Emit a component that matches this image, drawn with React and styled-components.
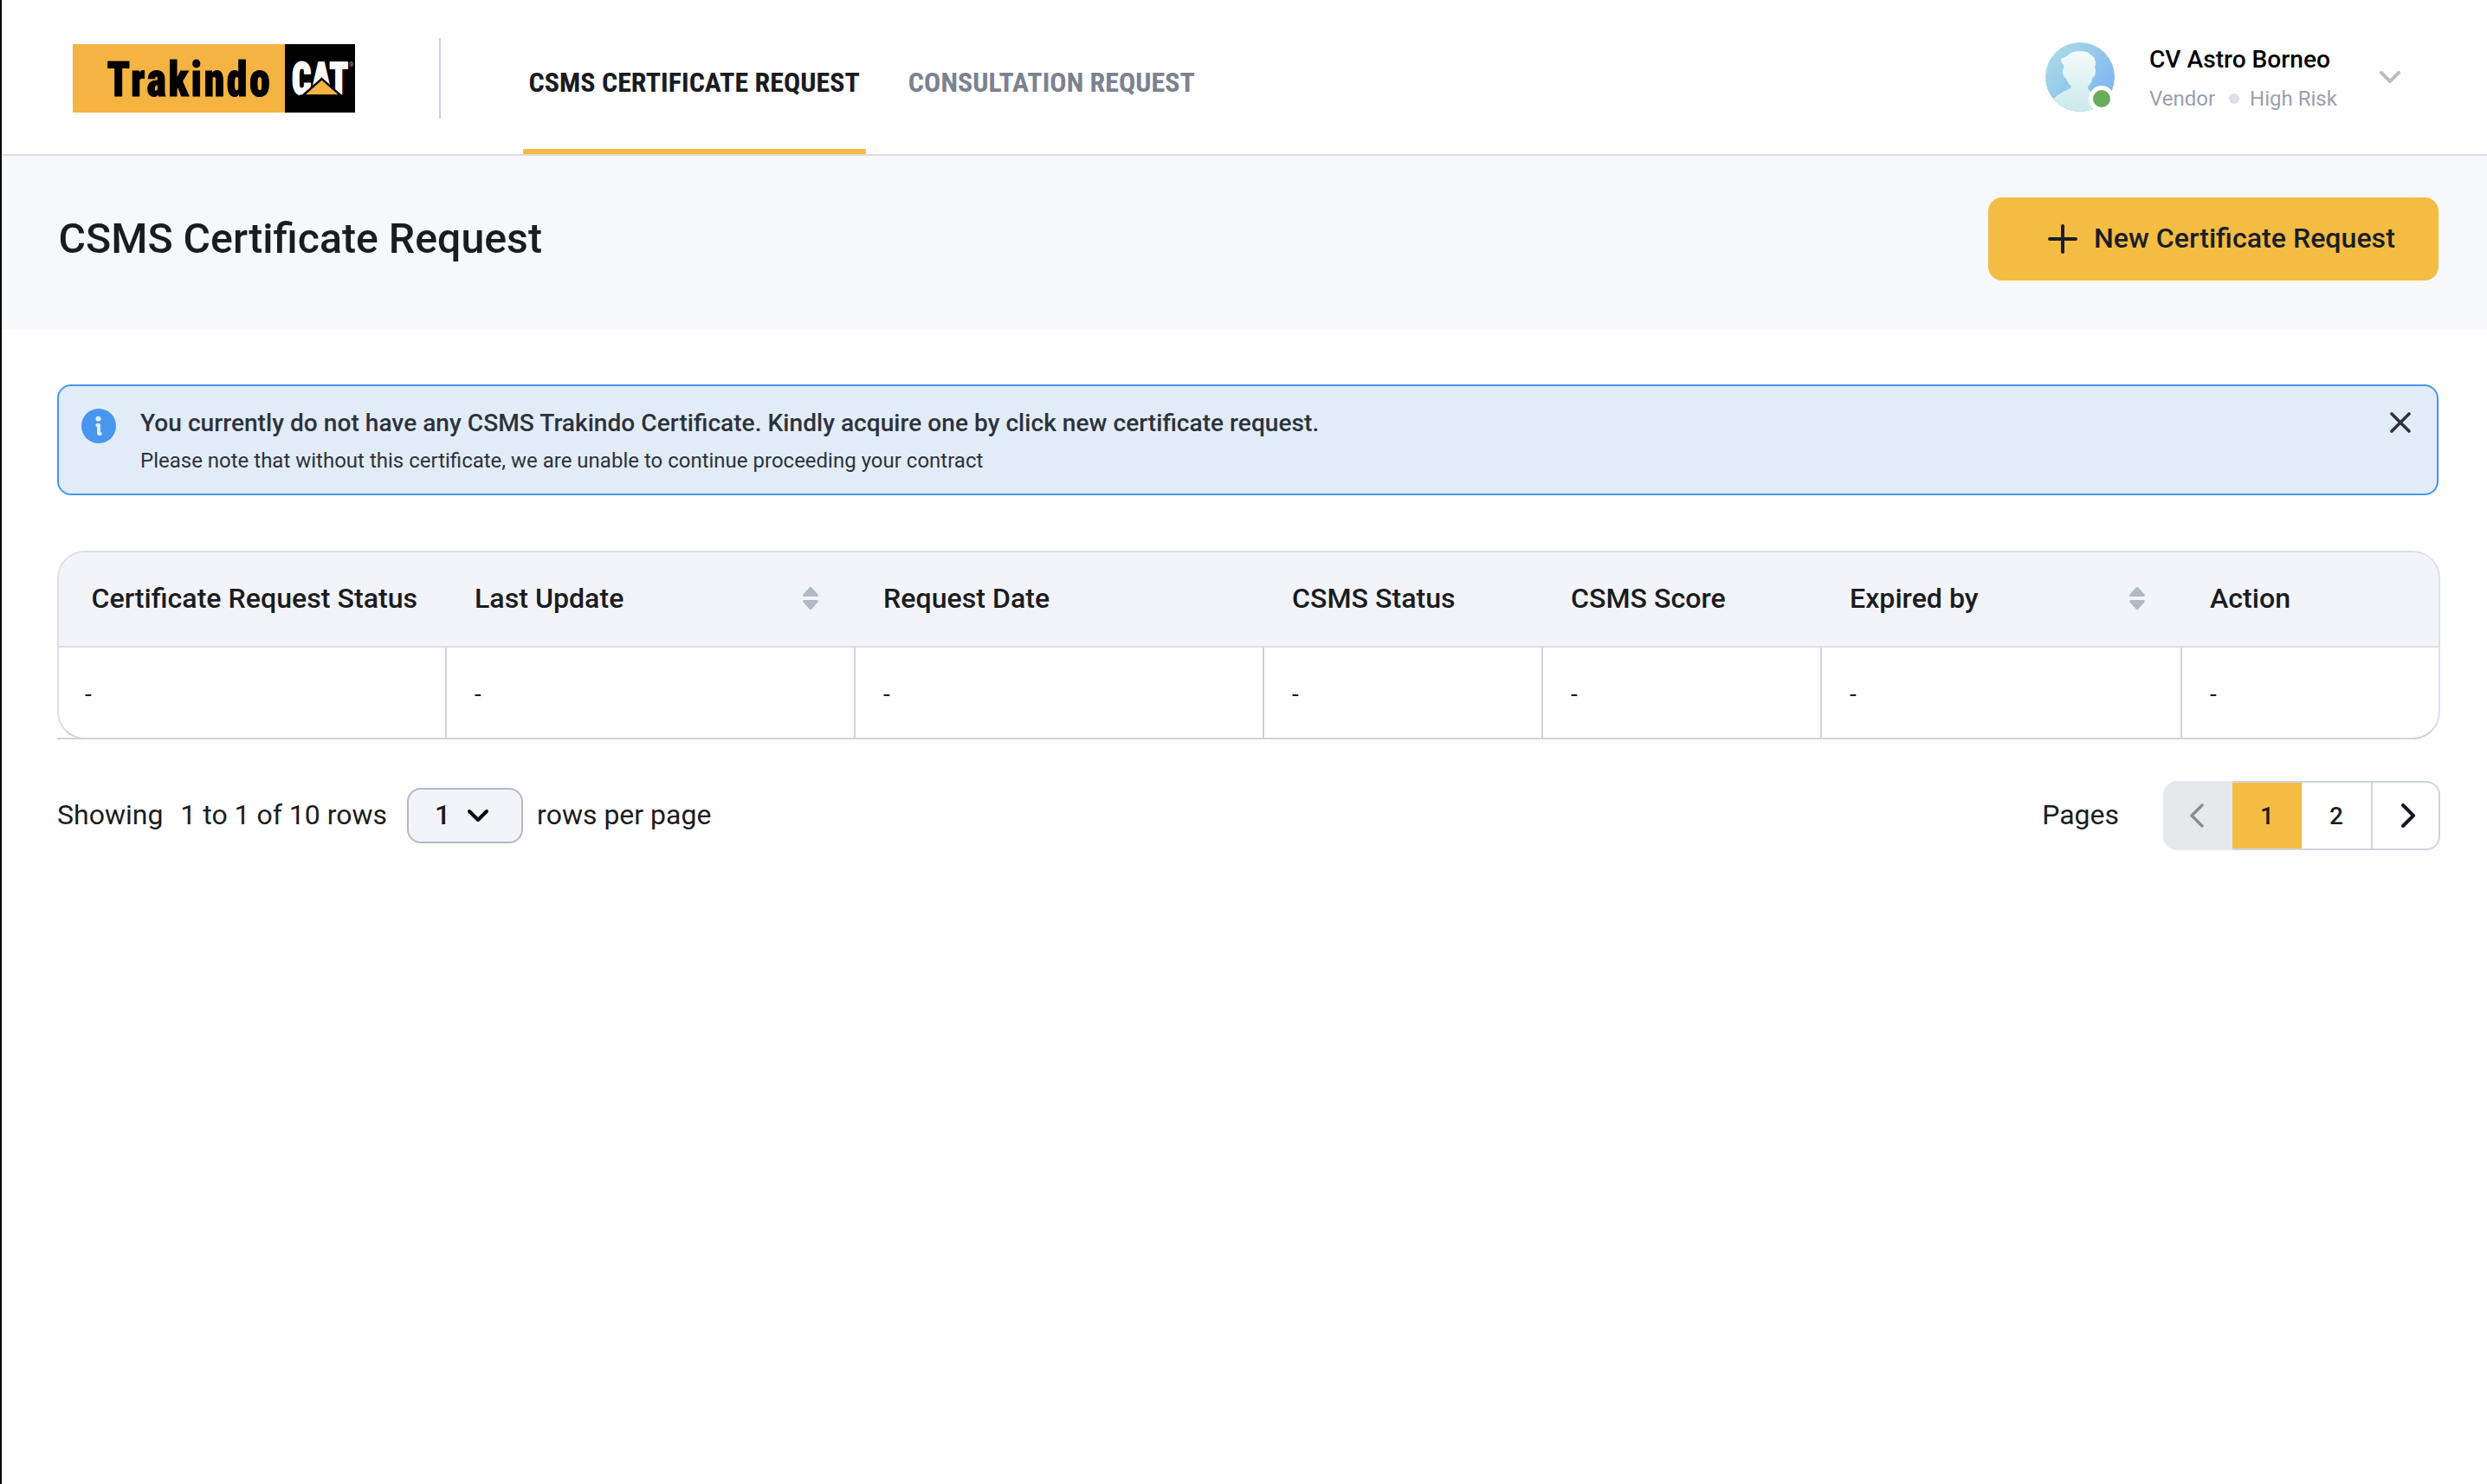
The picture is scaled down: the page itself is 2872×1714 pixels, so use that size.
import React from 'react';
import styled, { createGlobalStyle } from 'styled-components';

const GlobalStyle = createGlobalStyle`
    * {
        box-sizing: border-box;
    }

    body {
        margin: 0;
        background: #ffffff;
        color: #1b1c1f;
        font-family: Roboto, "Liberation Sans", sans-serif;
    }

    button {
        font-family: inherit;
        color: inherit;
        border: none;
        background: none;
        padding: 0;
    }
`;

const Page = styled.div`
    min-height: 1714px;
    border-left: 2px solid #000000;
`;

const Header = styled.header`
    display: flex;
    align-items: center;
    height: 180px;
    padding-left: 82px;
    padding-right: 100px;
    border-bottom: 2px solid #dddddd;
`;

const Logo = styled.svg`
    display: block;
    width: 326px;
    height: 79px;
    margin-top: 3px;
    overflow: visible;

    & > .word {
        font-family: "Roboto Condensed", Roboto, sans-serif;
        font-stretch: 75%;
        font-weight: 900;
    }
`;

const Divider = styled.div`
    width: 2px;
    height: 93px;
    margin-left: 97px;
    margin-top: 3px;
    background: #cdd2dd;
`;

const Nav = styled.nav`
    display: flex;
    gap: 42px;
    height: 178px;
    margin-left: 95px;
`;

const NavItem = styled.a`
    display: flex;
    align-items: center;
    height: 178px;
    padding: 23px 7.5px 6px 6.5px;
    border-bottom: 6px solid ${({ $active }) => ($active ? '#f3bc43' : 'transparent')};
    font-family: "Roboto Condensed", Roboto, sans-serif;
    font-stretch: 75%;
    font-size: 32px;
    font-weight: 700;
    color: ${({ $active }) => ($active ? '#1b1c1f' : '#7b8290')};
    white-space: nowrap;
`;

const Profile = styled.div`
    display: flex;
    align-items: center;
    margin-left: auto;

    & > .chevron {
        margin-left: 49px;
    }
`;

const Avatar = styled.svg`
    display: block;
    width: 80px;
    height: 80px;
    overflow: visible;
`;

const ProfileInfo = styled.div`
    width: 217px;
    margin-left: 40px;
    padding-top: 3px;

    & > .name {
        font-size: 28.15px;
        font-weight: 500;
        line-height: 40px;
        color: #000000;
    }

    & > .meta {
        display: flex;
        align-items: center;
        margin-top: 7px;
        font-size: 24px;
        line-height: 36px;
        color: #9a9fae;
        white-space: nowrap;
    }
`;

const Dot = styled.span`
    width: 12px;
    height: 12px;
    margin: 0 12px 0 16px;
    border-radius: 50%;
    background: #dbdfea;
`;

const TitleBar = styled.section`
    display: flex;
    justify-content: space-between;
    align-items: flex-start;
    height: 200px;
    padding: 48px 56px 0 65.5px;
    background: #f7f8fc;

    & > h1 {
        margin: 0;
        font-size: 48.25px;
        font-weight: 500;
        line-height: 96px;
    }
`;

const NewButton = styled.button`
    display: flex;
    align-items: center;
    gap: 19px;
    width: 520px;
    height: 96px;
    padding-left: 69px;
    border-radius: 16px;
    background: #f3bc43;
    font-size: 32.15px;
    font-weight: 500;
    color: #1b1e27;
    white-space: nowrap;

    & > span {
        padding-bottom: 2px;
    }
`;

const Content = styled.main`
    padding: 64px 54px 0 64px;
`;

const Alert = styled.div`
    display: flex;
    align-items: flex-start;
    width: 2750px;
    height: 128px;
    padding: 26px 30px 0 26px;
    border: 2px solid #4996ee;
    border-radius: 16px;
    background: #e2ecf8;
    color: #2d323c;

    & > .close {
        margin-left: auto;
        margin-top: 4px;
    }
`;

const AlertText = styled.div`
    margin-left: 28px;

    & > .title {
        margin-top: -1px;
        font-size: 28.15px;
        font-weight: 500;
        line-height: 36px;
    }

    & > .detail {
        margin-top: 9px;
        font-size: 24px;
        line-height: 32px;
    }
`;

const TableWrap = styled.div`
    height: 218px;
    margin-top: 64px;
    border-bottom: 2px solid #d0d2de;
    border-bottom-right-radius: 32px;
`;

const Table = styled.div`
    display: grid;
    grid-template-columns: 448px 472px 472px 322px 322px 416px 1fr;
    grid-template-rows: 110px 104px;
    height: 218px;
    border: 2px solid #dbe0ea;
    border-bottom-color: #d0d2de;
    border-radius: 32px;
    overflow: hidden;
`;

const HeadCell = styled.div`
    display: flex;
    align-items: center;
    justify-content: space-between;
    padding: 0 42px 0 ${({ $first }) => ($first ? '37.5px' : '32px')};
    border-bottom: 2px solid #dbe0ea;
    background: #f3f4fa;
    font-size: 32.15px;
    font-weight: 500;
    white-space: nowrap;

    & > span {
        padding-bottom: 2px;
    }

    & > svg {
        margin-bottom: 2px;
    }
`;

const Cell = styled.div`
    display: flex;
    align-items: center;
    padding: 2px 0 0 ${({ $first }) => ($first ? '30px' : '32px')};
    border-right: ${({ $last }) => ($last ? 'none' : '2px solid #d0d2de')};
    font-size: 28px;
`;

const Footer = styled.div`
    display: flex;
    align-items: center;
    height: 80px;
    margin-top: 48px;
    font-size: 32px;
    white-space: nowrap;

    & > span {
        padding-bottom: 2px;
    }

    & > .range {
        margin-left: 20px;
    }

    & > .pages {
        margin-left: auto;
        margin-right: 51px;
    }
`;

const RowSelect = styled.button`
    display: flex;
    align-items: center;
    gap: 18px;
    width: 134px;
    height: 64px;
    margin: 0 16px 0 23px;
    padding-left: 30px;
    border: 2px solid #b2b8c8;
    border-radius: 16px;
    background: #f3f4fa;
    font-size: 32px;
    font-weight: 500;

    & > span {
        padding-bottom: 2px;
    }
`;

const Pager = styled.div`
    display: flex;
    width: 320px;
    height: 80px;
`;

const PageButton = styled.button`
    display: flex;
    align-items: center;
    justify-content: center;
    width: 80px;
    height: 80px;
    border-top: 2px solid #d0d4de;
    border-bottom: 2px solid #d0d4de;
    background: ${({ $active }) => ($active ? '#f3bc43' : '#ffffff')};
    background-clip: padding-box;
    font-size: 28px;
    font-weight: 500;

    &:first-child {
        padding-right: 2px;
        border: none;
        border-radius: 16px 0 0 16px;
        background: #e7e8ec;
    }

    &:last-child {
        padding-left: 5px;
        border: 2px solid #d0d4de;
        border-radius: 0 16px 16px 0;
    }
`;

const TrakindoLogo = () => (
    <Logo viewBox='0 0 326 79'>
        <rect width='245' height='79' fill='#f5b342' />
        <rect x='245' width='81' height='79' fill='#000000' />
        <text
            className='word'
            transform='translate(39.500 60) scale(0.86 1)'
            fontSize='56'
            stroke='#000000'
            strokeWidth='1'
            textLength='219'
            lengthAdjust='spacing'
        >
            Trakindo
        </text>
        <text
            className='word'
            x='253'
            y='58'
            fill='#ffffff'
            stroke='#ffffff'
            strokeWidth='2'
            fontSize='52'
            textLength='65'
            lengthAdjust='spacingAndGlyphs'
        >
            CAT
        </text>
        <path d='M265.500 59.500 L287.500 40 L310 59.500 Z' fill='#f5b342' stroke='#000000' strokeWidth='2.400' />
        <rect x='262' y='58.500' width='50' height='4' fill='#000000' />
        <text x='319' y='26' fill='#aaaaaa' fontFamily='Roboto, sans-serif' fontSize='7'>®</text>
    </Logo>
);

const UserAvatar = () => (
    <Avatar viewBox='0 0 80 80'>
        <defs>
            <linearGradient id='avatarBg' x1='0.1' y1='0.1' x2='0.9' y2='0.8'>
                <stop offset='0' stopColor='#a9dbe6' />
                <stop offset='1' stopColor='#7fb4f2' />
            </linearGradient>
            <linearGradient id='avatarBody' x1='0' y1='0' x2='0' y2='1'>
                <stop offset='0' stopColor='#f6fafb' />
                <stop offset='1' stopColor='#c9eaec' />
            </linearGradient>
            <clipPath id='avatarClip'>
                <circle cx='40' cy='40' r='40' />
            </clipPath>
        </defs>
        <circle cx='40' cy='40' r='40' fill='url(#avatarBg)' />
        <path
            clipPath='url(#avatarClip)'
            fill='url(#avatarBody)'
            d='M18 19 C22 17 25 16 28 13 C34 10 47 8 52 14 C56 16 57 18 57 20 C59 23 58 26 57 29 C59 33 58 39 54.500 41 C54 45 52 48 49 51 C49 58 61 60 70 66 L80 80 H0 L9.500 65 C17 58 23 56 28.500 53 L30 51 C27 48 25 45 24 42 C20 40 19 34 21 30 C21 28 22 27 21 26 C19 24 18 22 18 19 Z'
        />
        <circle cx='65' cy='65' r='15' fill='#ffffff' />
        <circle cx='65' cy='65' r='10' fill='#68ac5b' />
    </Avatar>
);

const SortIcon = () => (
    <svg width='20' height='28' viewBox='0 0 20 28' fill='#b2b8c8'>
        <path d='M8.800 1.500 Q10 0 11.200 1.500 L18.500 9.500 Q19.500 12 17.500 12 H2.500 Q0.500 12 1.500 9.500 Z' />
        <path d='M8.800 26.500 Q10 28 11.200 26.500 L18.500 18.500 Q19.500 16 17.500 16 H2.500 Q0.500 16 1.500 18.500 Z' />
    </svg>
);

const InfoIcon = () => (
    <svg width='40' height='40' viewBox='0 0 40 40'>
        <circle cx='20' cy='20' r='20' fill='#4996ee' />
        <circle cx='19.500' cy='11.800' r='3' fill='#e2ecf8' />
        <path d='M18.300 19 H20 V29 H21.800' fill='none' stroke='#e2ecf8' strokeWidth='4' strokeLinecap='round' strokeLinejoin='round' />
    </svg>
);

const columns = [
    { label: 'Certificate Request Status' },
    { label: 'Last Update', sortable: true },
    { label: 'Request Date' },
    { label: 'CSMS Status' },
    { label: 'CSMS Score' },
    { label: 'Expired by', sortable: true },
    { label: 'Action' },
];

const App = () => {
    return (
        <>
            <GlobalStyle />
            <Page>
                <Header>
                    <TrakindoLogo />
                    <Divider />
                    <Nav>
                        <NavItem $active>CSMS CERTIFICATE REQUEST</NavItem>
                        <NavItem>CONSULTATION REQUEST</NavItem>
                    </Nav>
                    <Profile>
                        <UserAvatar />
                        <ProfileInfo>
                            <div className='name'>CV Astro Borneo</div>
                            <div className='meta'>
                                <span>Vendor</span>
                                <Dot />
                                <span>High Risk</span>
                            </div>
                        </ProfileInfo>
                        <svg className='chevron' width='24' height='16' viewBox='0 0 24 16' fill='none' stroke='#bdbdbd' strokeWidth='4' strokeLinecap='round' strokeLinejoin='round'>
                            <path d='M2 3 L12 13 L22 3' />
                        </svg>
                    </Profile>
                </Header>
                <TitleBar>
                    <h1>CSMS Certificate Request</h1>
                    <NewButton>
                        <svg width='34' height='34' viewBox='0 0 34 34' stroke='#1b1e27' strokeWidth='4' strokeLinecap='round'>
                            <path d='M17 2 V32 M2 17 H32' />
                        </svg>
                        <span>New Certificate Request</span>
                    </NewButton>
                </TitleBar>
                <Content>
                    <Alert>
                        <InfoIcon />
                        <AlertText>
                            <div className='title'>You currently do not have any CSMS Trakindo Certificate. Kindly acquire one by click new certificate request.</div>
                            <div className='detail'>Please note that without this certificate, we are unable to continue proceeding your contract</div>
                        </AlertText>
                        <svg className='close' width='24' height='24' viewBox='0 0 24 24' stroke='#2d323c' strokeWidth='3.600' strokeLinecap='round'>
                            <path d='M2 2 L22 22 M22 2 L2 22' />
                        </svg>
                    </Alert>
                    <TableWrap>
                        <Table>
                            {columns.map(({ label, sortable }, i) => (
                                <HeadCell key={label} $first={i === 0}>
                                    <span>{label}</span>
                                    {sortable && <SortIcon />}
                                </HeadCell>
                            ))}
                            {columns.map(({ label }, i) => (
                                <Cell key={label} $first={i === 0} $last={i === columns.length - 1}>-</Cell>
                            ))}
                        </Table>
                    </TableWrap>
                    <Footer>
                        <span>Showing</span>
                        <span className='range'>1 to 1 of 10 rows</span>
                        <RowSelect>
                            <span>1</span>
                            <svg width='28' height='18' viewBox='0 0 28 18' fill='none' stroke='#000000' strokeWidth='4' strokeLinecap='round' strokeLinejoin='round'>
                                <path d='M4 4 L14 14 L24 4' />
                            </svg>
                        </RowSelect>
                        <span>rows per page</span>
                        <span className='pages'>Pages</span>
                        <Pager>
                            <PageButton>
                                <svg width='18' height='28' viewBox='0 0 18 28' fill='none' stroke='#8b8c94' strokeWidth='3.400' strokeLinecap='round' strokeLinejoin='round'>
                                    <path d='M15 2 L3 14 L15 26' />
                                </svg>
                            </PageButton>
                            <PageButton $active>1</PageButton>
                            <PageButton>2</PageButton>
                            <PageButton>
                                <svg width='18' height='28' viewBox='0 0 18 28' fill='none' stroke='#15162a' strokeWidth='4' strokeLinecap='round' strokeLinejoin='round'>
                                    <path d='M3 2 L15 14 L3 26' />
                                </svg>
                            </PageButton>
                        </Pager>
                    </Footer>
                </Content>
            </Page>
        </>
    );
};

export default App;
